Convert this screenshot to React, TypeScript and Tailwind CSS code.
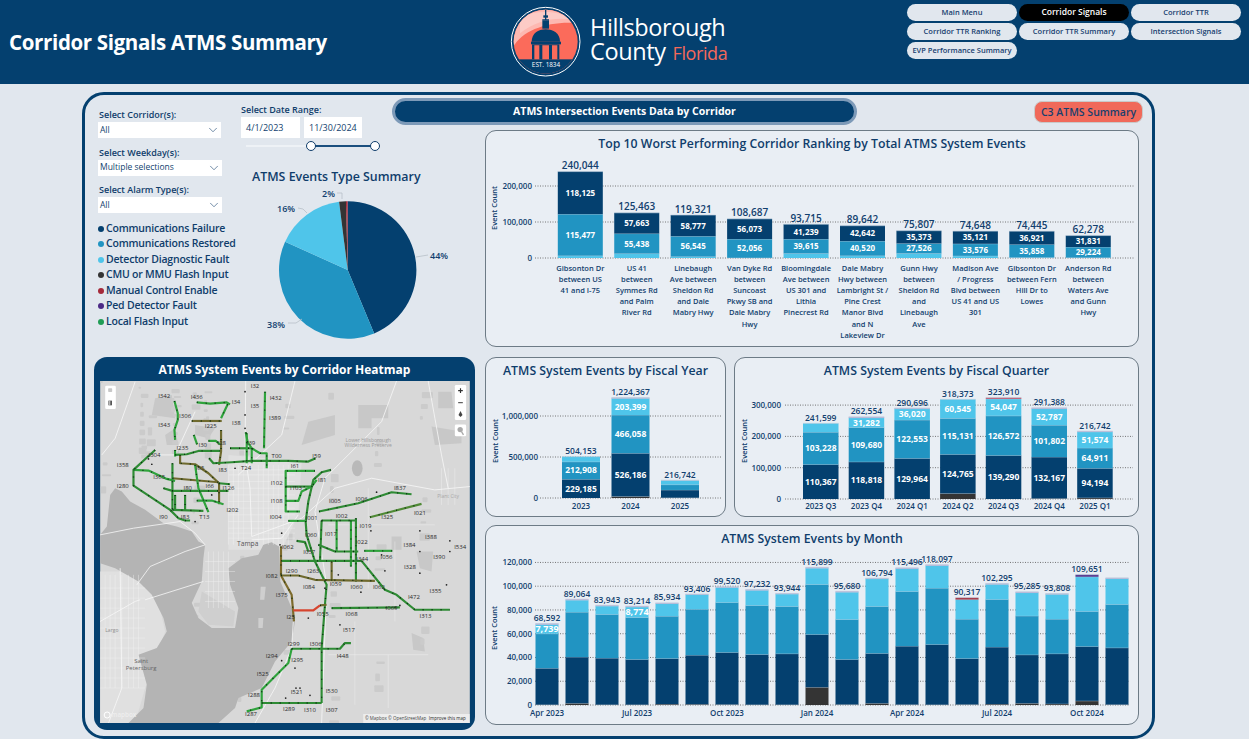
import { ChevronDown } from 'lucide-react';

const NAVY = '#04406f';
const BLUE = '#2194c2';
const LIGHT = '#4fc5ea';
const DARK = '#343434';
const LILAC = '#b9a9d3';
const RED = '#a52a3a';
const PURPLE = '#4b2a86';
const INK = '#123f6e';

type Seg = [number, string, string?];
type Bar = { total?: string; segs: Seg[]; cat?: string[] };

const navItems = [
  'Main Menu',
  'Corridor Signals',
  'Corridor TTR',
  'Corridor TTR Ranking',
  'Corridor TTR Summary',
  'Intersection Signals',
  'EVP Performance Summary',
];

const legend = [
  ['Communications Failure', NAVY],
  ['Communications Restored', BLUE],
  ['Detector Diagnostic Fault', LIGHT],
  ['CMU or MMU Flash Input', DARK],
  ['Manual Control Enable', RED],
  ['Ped Detector Fault', PURPLE],
  ['Local Flash Input', '#1f9d55'],
];

const fmt = (n: number) => n.toLocaleString('en-US');

// top chart: total, navy, blue, the rest is the light part at the bottom
const topBars: [number, number, number, string[]][] = [
  [240044, 118125, 115477, ['Gibsonton Dr', 'between US', '41 and I-75']],
  [125463, 57663, 55438, ['US 41', 'between', 'Symmes Rd', 'and Palm', 'River Rd']],
  [119321, 58777, 56545, ['Linebaugh', 'Ave between', 'Sheldon Rd', 'and Dale', 'Mabry Hwy']],
  [108687, 56073, 52056, ['Van Dyke Rd', 'between', 'Suncoast', 'Pkwy SB and', 'Dale Mabry', 'Hwy']],
  [93715, 41239, 39615, ['Bloomingdale', 'Ave between', 'US 301 and', 'Lithia', 'Pinecrest Rd']],
  [89642, 42642, 40520, ['Dale Mabry', 'Hwy between', 'Lambright St /', 'Pine Crest', 'Manor Blvd', 'and N', 'Lakeview Dr']],
  [75807, 35373, 27526, ['Gunn Hwy', 'between', 'Sheldon Rd', 'and', 'Linebaugh', 'Ave']],
  [74648, 35121, 33576, ['Madison Ave', '/ Progress', 'Blvd between', 'US 41 and US', '301']],
  [74445, 36921, 35858, ['Gibsonton Dr', 'between Fern', 'Hill Dr to', 'Lowes']],
  [62278, 31831, 29224, ['Anderson Rd', 'between', 'Waters Ave', 'and Gunn', 'Hwy']],
];

const yearBars: Bar[] = [
  { total: '504,153', cat: ['2023'], segs: [[229185, NAVY, '229,185'], [212908, BLUE, '212,908'], [62060, LIGHT]] },
  {
    total: '1,224,367',
    cat: ['2024'],
    segs: [[20000, DARK], [526186, NAVY, '526,186'], [466058, BLUE, '466,058'], [203399, LIGHT, '203,399'], [8724, LILAC]],
  },
  { total: '216,742', cat: ['2025'], segs: [[4000, DARK], [94194, NAVY], [64911, BLUE], [51574, LIGHT], [2063, LILAC]] },
];

const quarterBars: Bar[] = [
  { total: '241,599', cat: ['2023 Q3'], segs: [[110367, NAVY, '110,367'], [103228, BLUE, '103,228'], [28004, LIGHT]] },
  { total: '262,554', cat: ['2023 Q4'], segs: [[118818, NAVY, '118,818'], [109680, BLUE, '109,680'], [31282, LIGHT, '31,282'], [2774, LILAC]] },
  { total: '290,696', cat: ['2024 Q1'], segs: [[129964, NAVY, '129,964'], [122553, BLUE, '122,553'], [36020, LIGHT, '36,020'], [2159, LILAC]] },
  { total: '318,373', cat: ['2024 Q2'], segs: [[17932, DARK], [124765, NAVY, '124,765'], [115131, BLUE, '115,131'], [60545, LIGHT, '60,545']] },
  { total: '323,910', cat: ['2024 Q3'], segs: [[139290, NAVY, '139,290'], [126572, BLUE, '126,572'], [54047, LIGHT, '54,047'], [4001, '#c0506a']] },
  { total: '291,388', cat: ['2024 Q4'], segs: [[2000, DARK], [132167, NAVY, '132,167'], [101802, BLUE, '101,802'], [52787, LIGHT, '52,787'], [2632, LILAC]] },
  { total: '216,742', cat: ['2025 Q1'], segs: [[4000, DARK], [94194, NAVY, '94,194'], [64911, BLUE, '64,911'], [51574, LIGHT, '51,574'], [2063, LILAC]] },
];

// dark, navy top, blue top, light top, total (all in thousands except the label)
const monthRows: [number, number, number, number, string, string?, string?][] = [
  [0.3, 31, 60, 67.8, '68,592', '7,739'],
  [1.5, 40.4, 78.2, 88.3, '89,064'],
  [0.3, 39.5, 76.3, 83.3, '83,943'],
  [0.3, 38.4, 73.7, 82.5, '83,214', '8,774'],
  [0.8, 39.2, 74.8, 85.4, '85,934'],
  [0.7, 42, 80.7, 93, '93,406'],
  [0.5, 44.3, 86.3, 99, '99,520'],
  [0.3, 42.6, 83.8, 96.6, '97,232'],
  [0.3, 43.2, 83, 93.4, '93,944'],
  [15, 59.4, 101.5, 115.2, '115,899'],
  [0.5, 38.4, 72, 95, '95,680'],
  [1.5, 43.5, 83, 106.3, '106,794'],
  [0.4, 49.6, 95.6, 114.8, '115,496'],
  [0.3, 51, 98.4, 117.4, '118,097'],
  [0.5, 39.2, 72.3, 88.8, '90,317', undefined, RED],
  [0.8, 48.8, 88.9, 101.6, '102,295'],
  [1.5, 42.3, 75, 94.6, '95,285'],
  [1, 43.2, 72.3, 93.2, '93,808'],
  [3.5, 49.3, 78.8, 108, '109,651', undefined, PURPLE],
  [0.4, 48.2, 84.7, 106.4, ''],
];

const monthCats = ['Apr 2023', 'Jul 2023', 'Oct 2023', 'Jan 2024', 'Apr 2024', 'Jul 2024', 'Oct 2024'];

const monthBars: Bar[] = monthRows.map(([d, n, b, l, total, lab, topColor], i) => {
  const end = total ? parseFloat(total.replace(',', '')) / 1000 : 107;
  return {
    total,
    cat: i % 3 === 0 ? [monthCats[i / 3]] : undefined,
    segs: [
      [d * 1000, DARK],
      [(n - d) * 1000, NAVY],
      [(b - n) * 1000, BLUE],
      [(l - b) * 1000, LIGHT, lab],
      [(end - l) * 1000, topColor ?? LILAC],
    ],
  };
});

function StackedChart(props: {
  box: [number, number, number, number];
  base: number;
  scale: number;
  x0: number;
  step: number;
  barW: number;
  ticks: number[];
  tickX: number;
  gridFrom: number;
  gridTo: number;
  axisX: number;
  axisY: number;
  bars: Bar[];
  catY: number;
  catSize?: number;
  labelSize?: number;
  totalSize?: number;
}) {
  const { box, base, scale, x0, step, barW, ticks, tickX, gridFrom, gridTo, axisX, axisY, bars, catY } = props;
  const labelSize = props.labelSize ?? 8.5;
  const totalSize = props.totalSize ?? 8.5;
  const catSize = props.catSize ?? 8;
  return (
    <svg viewBox={box.join(' ')} width={box[2]} height={box[3]} className="block">
      {ticks.map((t) => (
        <g key={t}>
          <line x1={gridFrom} x2={gridTo} y1={base - t * scale} y2={base - t * scale} stroke="#555" strokeWidth="0.8" strokeDasharray="1 1.5" />
          <text x={tickX} y={base - t * scale + 3} textAnchor="end" fontSize="8" fontWeight="600" fill={INK}>
            {fmt(t)}
          </text>
        </g>
      ))}
      <text transform={`translate(${axisX} ${axisY}) rotate(-90)`} textAnchor="middle" fontSize="7.5" fontWeight="600" fill={INK}>
        Event Count
      </text>
      {bars.map((bar, i) => {
        const x = x0 + i * step;
        let acc = 0;
        const top = bar.segs.reduce((s, g) => s + g[0], 0);
        return (
          <g key={i}>
            {bar.segs.map((seg, j) => {
              const y = base - (acc + seg[0]) * scale;
              const h = seg[0] * scale;
              acc += seg[0];
              return (
                <g key={j}>
                  <rect x={x} y={y} width={barW} height={h} fill={seg[1]} />
                  <line x1={x} x2={x + barW} y1={y} y2={y} stroke="#b8cbdb" strokeWidth="0.6" />
                  {seg[2] && (
                    <text x={x + barW / 2} y={y + h / 2 + 3} textAnchor="middle" fontSize={labelSize} fontWeight="700" fill="#fff">
                      {seg[2]}
                    </text>
                  )}
                </g>
              );
            })}
            {bar.total && (
              <text x={x + barW / 2} y={base - top * scale - 2.5} textAnchor="middle" fontSize={totalSize} fontWeight="600" fill={INK}>
                {bar.total}
              </text>
            )}
            {bar.cat?.map((line, k) => (
              <text key={k} x={x + barW / 2} y={catY + k * 11.1} textAnchor="middle" fontSize={catSize} fontWeight="600" fill={INK}>
                {line}
              </text>
            ))}
          </g>
        );
      })}
    </svg>
  );
}

function Card({ title, className, children }: { title: string; className: string; children: React.ReactNode }) {
  return (
    <div className={`rounded-[11px] border border-[#6d7b86] bg-[#e9eef4] overflow-hidden ${className}`}>
      <div className="text-center text-[12.3px] font-semibold text-[#0f3d6b] h-[27px] leading-[25px]">{title}</div>
      {children}
    </div>
  );
}

function Slicer({ label, value, width }: { label: string; value: string; width: string }) {
  return (
    <div className="mb-[7.5px]">
      <div className="text-[9px] font-semibold text-[#0f3d6b] h-[14px] leading-[14px] pl-[1px]">{label}</div>
      <div className={`bg-white h-[16px] flex items-center justify-between pl-[2px] pr-[1px] ${width}`}>
        <span className="text-[8.5px] text-[#123f6e]">{value}</span>
        <ChevronDown size={14} strokeWidth={1} color="#0f3d6b" />
      </div>
    </div>
  );
}

function pieSlice(from: number, to: number) {
  const r = 68.7;
  const pt = (p: number) => {
    const a = (p / 100) * 2 * Math.PI;
    return `${(r * Math.sin(a)).toFixed(2)} ${(-r * Math.cos(a)).toFixed(2)}`;
  };
  return `M0 0 L${pt(from)} A${r} ${r} 0 ${to - from > 50 ? 1 : 0} 1 ${pt(to)} Z`;
}

function Pie() {
  const slices: [number, number, string][] = [
    [0, 43.7, NAVY],
    [43.7, 81.75, BLUE],
    [81.75, 98, LIGHT],
    [98, 99.6, DARK],
    [99.6, 100, RED],
  ];
  return (
    <svg viewBox="240 186 220 160" width={220} height={160} className="block">
      <g transform="translate(347.7 270)">
        {slices.map(([a, b, c]) => (
          <path key={c} d={pieSlice(a, b)} fill={c} />
        ))}
      </g>
      <g fill="none" stroke="#b8c0c8" strokeWidth="0.8">
        <path d="M416 257 L428 255" />
        <path d="M288 323 L296 323 L302 319" />
        <path d="M298 208 L303 209 L307 213" />
        <path d="M337 193 L342 193 L342 199" />
      </g>
      <g fontSize="9" fontWeight="600" fill={INK}>
        <text x="430" y="259">44%</text>
        <text x="267" y="328">38%</text>
        <text x="277" y="212">16%</text>
        <text x="322" y="197">2%</text>
      </g>
    </svg>
  );
}

function Logo() {
  return (
    <svg viewBox="90 18 216 216" width={72} height={72} className="block">
      <defs>
        <clipPath id="seal">
          <circle cx="197" cy="125" r="96" />
        </clipPath>
      </defs>
      <circle cx="197" cy="125" r="103" fill="none" stroke="#fff" strokeWidth="3" />
      <g clipPath="url(#seal)">
        <rect x="90" y="18" width="216" height="216" fill="#fb6b5b" />
        <path d="M95 150 C120 90 210 60 300 70 L300 20 L90 20 Z" fill="#fdb8b1" />
        <path d="M120 50 C170 30 240 30 280 60 C230 50 170 60 120 100 Z" fill="#fccbc6" />
        <rect x="90" y="178" width="216" height="60" fill={NAVY} />
      </g>
      <path d="M197 30 L197 60 M187 60 L207 60" stroke={NAVY} strokeWidth="4" fill="none" />
      <rect x="190" y="46" width="14" height="7" fill={NAVY} />
      <rect x="187" y="62" width="20" height="24" fill={NAVY} />
      <path d="M155 125 C155 100 175 88 197 88 C220 88 240 100 240 125 Z" fill={NAVY} />
      <rect x="153" y="125" width="90" height="8" fill={NAVY} />
      <path d="M156 133 H238 V178 H156 Z" fill={NAVY} />
      <path d="M163 136 H178 V178 H163 Z M187 136 H207 V178 H187 Z M216 136 H232 V178 H216 Z" fill="#fb6b5b" />
      <text x="198" y="201" textAnchor="middle" fontSize="19" fill="#fff">EST. 1834</text>
    </svg>
  );
}

type Line = [string, string];
const G = '#2fa33c';
const DG = '#2e8b34';
const O = '#6f6a2e';
const corridors: Line[] = [
  ['M238 138 L248 175 L248 195 L238 225 L240 255', G],
  ['M305 142 L345 146 L395 142 L405 148', G],
  ['M398 148 L378 190', G],
  ['M290 198 L380 198', O],
  ['M378 225 L378 290 L372 330', O],
  ['M296 240 L306 268', G],
  ['M340 258 L362 258 L375 268', G],
  ['M405 280 L470 280', DG],
  ['M452 232 L458 262 L470 280 L495 295 L515 295 L515 340', G],
  ['M455 235 L455 325', G],
  ['M470 280 L470 325', G],
  ['M510 110 L507 280', G],
  ['M240 285 L240 305', G],
  ['M240 300 L275 298 L310 288 L375 288', DG],
  ['M342 310 L355 325 L410 322 L470 318 L580 318 L640 320 L662 310', DG],
  ['M180 285 L115 345 L115 392 L225 465 L250 490 L270 497 L285 497', DG],
  ['M115 345 L160 347 L215 372 L240 378', G],
  ['M232 370 L370 382', O],
  ['M255 300 L255 325 L300 328 L340 355 L372 385', O],
  ['M232 325 L232 465', DG],
  ['M205 400 L232 408 L400 408', DG],
  ['M300 330 L310 400 L340 472', G],
  ['M372 385 L372 448', O],
  ['M305 437 L350 437 L385 448', G],
  ['M232 465 L325 468', DG],
  ['M240 420 L240 465', DG],
  ['M270 420 L270 465', DG],
  ['M372 385 L405 388', DG],
  ['M660 348 L572 348 L572 470 L615 470', G],
  ['M572 395 L650 395', DG],
  ['M572 438 L610 438 L620 410 L650 395 L665 375', G],
  ['M708 345 L680 352 L655 375 L640 440 L632 500 L635 540 L660 620 L695 690 L690 750 L680 880 L680 1045', DG],
  ['M580 498 L635 498', G],
  ['M672 470 L790 445 L890 412 L950 418', DG],
  ['M825 487 L980 447', '#4f8a35'],
  ['M680 497 L785 497', DG],
  ['M680 497 L675 620', DG],
  ['M725 497 L725 590', G],
  ['M768 497 L768 635', G],
  ['M783 490 L783 680', DG],
  ['M605 558 L630 562 L640 590', DG],
  ['M670 570 L720 590 L790 590', DG],
  ['M808 588 L892 588', G],
  ['M558 618 L800 618 L870 705 L905 720 L960 765 L1065 765', DG],
  ['M558 575 L558 662 L590 720 L597 800', '#7d6b2c'],
  ['M558 662 L610 662 L660 675 L840 678', O],
  ['M675 752 L695 750', O],
  ['M710 760 L915 758', DG],
  ['M590 882 L735 882 L750 865 L768 865', DG],
  ['M590 882 L580 925 L500 1005 L500 1058 L455 1070', G],
  ['M500 1045 L680 1045', DG],
  ['M710 620 L710 678', O],
];

const mapLabels: [string, number, number][] = [
  ['I342', 207, 122], ['I436', 305, 127], ['I34', 423, 142], ['I32', 480, 92], ['I432', 542, 130], ['I35', 480, 153],
  ['I389', 540, 188], ['I306', 270, 182], ['I343', 207, 210], ['I225', 347, 213], ['I38', 424, 205], ['I39', 468, 264],
  ['I28', 380, 263], ['I30', 323, 270], ['I235', 262, 278], ['I304', 178, 300], ['I358', 83, 330], ['T00', 545, 302],
  ['I59', 665, 302], ['T24', 453, 338], ['I61', 600, 332], ['I83', 383, 345], ['I65', 315, 338], ['I365', 192, 367],
  ['I280', 83, 394], ['I80', 278, 398], ['I66', 344, 392], ['I126', 400, 398], ['I102', 545, 384], ['I103', 603, 398],
  ['I108', 545, 438], ['I81', 682, 375], ['I005', 720, 437], ['I006', 800, 433], ['I837', 915, 400], ['I021', 975, 474],
  ['I325', 877, 485], ['I002', 740, 483], ['I001', 650, 488], ['I004', 542, 487], ['I202', 412, 465], ['T13', 328, 487],
  ['I83', 270, 487], ['I90', 205, 487], ['I019', 812, 514], ['I017', 708, 536], ['I060', 648, 540], ['I022', 800, 563],
  ['I388', 1008, 546], ['I384', 944, 570], ['I534', 1096, 577], ['I056', 875, 606], ['I390', 1033, 606], ['I328', 945, 636],
  ['I344', 802, 614], ['I062', 578, 576], ['I057', 643, 592], ['I290', 590, 648], ['I263', 655, 648], ['I082', 530, 663],
  ['I059', 722, 687], ['I084', 642, 696], ['I060', 785, 696], ['I062', 852, 696], ['I375', 560, 720], ['I472', 957, 728],
  ['I355', 1022, 710], ['I313', 992, 785], ['I068', 770, 778], ['I069', 890, 760], ['I055', 683, 778], ['I25', 587, 787],
  ['I517', 762, 827], ['I299', 596, 867], ['I306', 662, 867], ['I448', 743, 903], ['I294', 530, 903], ['I295', 607, 915],
  ['I525', 503, 958], ['I288', 477, 1020], ['I521', 605, 1013], ['I530', 710, 1008], ['I289', 582, 1064], ['I310', 645, 1066],
  ['I307', 710, 1066], ['I287', 468, 1078],
];

const roads = [
  'M15 540 L115 520 L255 500 L300 535 L330 570',
  'M125 690 L165 635 L270 590 L330 570',
  'M150 735 L325 680',
  'M452 78 L450 300 L465 400 L470 545',
  'M470 545 L620 490 L720 400 L830 370 L1020 405 L1125 395',
  'M905 78 L860 200 L760 300 L690 370 L660 470 L695 690 L680 1105',
  'M1000 78 L1040 300 L1060 400',
  'M470 555 L560 550 L610 480',
  'M595 800 L590 880 L540 1000 L480 1105',
  'M15 800 L120 740 L135 735',
  'M75 640 L80 1000 L40 1105',
  'M600 78 L560 240 L430 360',
  'M120 80 L60 250 L20 300',
  'M300 170 L240 300 L180 300',
];

const grid = [
  ...[400, 415, 430, 445, 490, 505, 520, 535, 550, 565, 580].map((x) => `M${x} 330 V570`),
  ...[345, 360, 380, 400, 420, 440, 460, 480, 500, 520, 535, 550].map((y) => `M400 ${y} H600`),
  ...[30, 45, 60, 80, 100, 115, 130].map((x) => `M${x} 660 V1000`),
  ...[700, 730, 760, 790, 820, 850, 880, 910, 940, 970, 1000].map((y) => `M15 ${y} H150`),
  ...[340, 355, 370, 385, 400].map((x) => `M${x} 590 V760`),
  ...[620, 650, 680, 710, 740].map((y) => `M330 ${y} H420`),
  ...[1040, 1060, 1080].map((x) => `M${x} 340 V450`),
  'M700 510 H1020', 'M820 400 V700', 'M900 560 V800', 'M700 900 H1000', 'M780 800 V1050', 'M880 900 L880 1060',
];

const patches = [
  'M790 150 H880 V190 H830 V220 H790 Z', 'M640 200 L720 180 L720 240 L620 270 Z', 'M1010 215 L1100 230 L1100 265 L1020 270 Z',
  'M1030 110 L1070 110 L1075 160 L1030 160 Z', 'M965 590 L1015 590 L1010 650 L975 640 Z', 'M890 545 L920 545 L920 585 L890 585 Z',
  'M950 835 L985 850 L990 890 L955 885 Z', 'M180 130 L230 120 L240 190 L170 180 Z', 'M210 240 L240 220 L250 270 L215 270 Z',
  'M100 980 L140 1000 L130 1050 L90 1030 Z', 'M300 210 L360 220 L340 250 L300 240 Z',
];

// small darker blotches for the wetlands and parks, spread over the land
const blobs = [
  ...Array.from({ length: 80 }, (_, i) => [15 + ((i * 137) % 1095), 78 + ((i * 211) % 1020), 8 + ((i * 7) % 26), 6 + ((i * 11) % 20)]),
  ...Array.from({ length: 30 }, (_, i) => [130 + ((i * 97) % 290), 95 + ((i * 61) % 210), 8 + ((i * 5) % 18), 6 + ((i * 9) % 14)]),
];

const dots = [
  [450, 110], [450, 180], [450, 220], [170, 328], [160, 312], [350, 420], [300, 500], [560, 535], [555, 570], [845, 412], [828, 528],
  [975, 528], [1065, 558], [1065, 590], [975, 590], [975, 655], [870, 648], [860, 600], [798, 712], [1055, 690], [735, 810], [600, 940],
  [560, 918], [645, 1022], [603, 1000], [615, 1000], [572, 1030], [690, 700], [915, 752], [640, 790], [420, 340], [730, 660],
];

function MapDrawing() {
  return (
    <svg viewBox="15 78 1110 1027" width={370} height={342} className="block">
      <rect x="15" y="78" width="1110" height="1027" fill="#d8d8d8" />
      {patches.map((d) => (
        <path key={d} d={d} fill="#c8c8c8" />
      ))}
      {blobs.map(([x, y, w, h], i) => (
        <rect key={i} x={x} y={y} width={w} height={h} rx="3" fill="#cbcbcb" />
      ))}
      <ellipse cx="787" cy="340" rx="16" ry="24" fill="#b9b9b9" />
      <path d="M400 300 L620 320 L610 480 L560 585 L400 585 Z M15 650 H170 L210 830 L150 1000 L120 1105 H15 Z" fill="#e0e0e0" />
      <path
        d="M15 540 L35 515 L45 420 L60 400 L80 410 L105 440 L150 465 L205 505 L245 515 L290 530 L310 560 L330 570 L325 610 L320 680 L290 745 L310 790 L350 820 L420 820 L430 760 L405 690 L400 640 L440 610 L490 600 L505 570 L530 562 L552 575 L556 680 L590 760 L600 800 L590 860 L540 920 L500 1000 L430 1030 L420 1060 L370 1105 L100 1105 L145 1060 L155 990 L130 900 L185 880 L215 830 L205 790 L170 720 L130 680 L60 640 L15 625 Z"
        fill="#b4b4b4"
      />
      <path d="M497 696 L512 696 L508 735 L495 735 Z M490 790 L505 790 L503 820 L490 820 Z M320 710 L420 770 L415 815 L340 810 L310 770 Z" fill="#cfcfcf" />
      <path d={grid.join(' ')} stroke="#f3f3f3" strokeWidth="1.2" fill="none" />
      <path d={roads.join(' ')} stroke="#f7f7f7" strokeWidth="2.4" fill="none" />
      <text x="820" y="262" textAnchor="middle" fontSize="15" fill="#9a9a9a">Lower Hillsborough</text>
      <text x="820" y="277" textAnchor="middle" fontSize="15" fill="#9a9a9a">Wilderness Preserve</text>
      <text x="1060" y="430" textAnchor="middle" fontSize="15" fill="#a8a8a8">Plant City</text>
      <text x="50" y="833" textAnchor="middle" fontSize="15" fill="#8f8f8f">Largo</text>
      <text x="458" y="574" textAnchor="middle" fontSize="20" fill="#555">Tampa</text>
      <text x="138" y="924" textAnchor="middle" fontSize="18" fill="#666">Saint</text>
      <text x="138" y="946" textAnchor="middle" fontSize="18" fill="#666">Petersburg</text>
      {corridors.map(([d, c], i) => (
        <path key={i} d={d} stroke={c} strokeWidth="6.5" fill="none" strokeLinejoin="round" />
      ))}
      <path d="M595 767 L655 767 L675 752" stroke="#d6452f" strokeWidth="6.5" fill="none" />
      {corridors.map(([d], i) => (
        <path key={i} d={d} stroke="#0d2b12" strokeWidth="4" fill="none" strokeDasharray="3 24" />
      ))}
      {dots.map(([x, y], i) => (
        <circle key={i} cx={x} cy={y} r="2.6" fill="#222" />
      ))}
      {mapLabels.map(([t, x, y], i) => (
        <text key={i} x={x} y={y + 6} textAnchor="middle" fontSize="18" fill="#2b2b2b">
          {t}
        </text>
      ))}
      <rect x="30" y="92" width="32" height="70" rx="4" fill="#fff" />
      <rect x="39" y="100" width="12" height="11" rx="2" fill="#c8c8c8" />
      <path d="M40 137 H50 V151 H40 Z" fill="#333" />
      <path d="M44 137 V151" stroke="#fff" strokeWidth="3" />
      <rect x="1080" y="90" width="34" height="105" rx="4" fill="#fff" />
      <path d="M1097 100 V114 M1090 107 H1104" stroke="#333" strokeWidth="3.5" />
      <path d="M1090 143 H1104" stroke="#555" strokeWidth="3.5" />
      <path d="M1097 168 L1103 180 L1097 186 L1091 180 Z" fill="#444" />
      <rect x="1080" y="209" width="34" height="35" rx="4" fill="#fff" />
      <circle cx="1096" cy="224" r="8" fill="#aaa" />
      <path d="M1100 230 L1106 240" stroke="#aaa" strokeWidth="4" />
      <circle cx="36" cy="1081" r="9" fill="none" stroke="#fff" strokeWidth="3" />
      <text x="86" y="1087" textAnchor="middle" fontSize="19" fontWeight="600" fill="#eee">mapbox</text>
      <rect x="805" y="1078" width="320" height="27" fill="#fff" opacity="0.55" />
      <text x="810" y="1096" fontSize="13.5" fill="#444">© Mapbox © OpenStreetMap</text>
      <text x="1002" y="1096" fontSize="13.5" fill="#222">Improve this map</text>
    </svg>
  );
}

export default function App() {
  return (
    <div className="w-[1249px] h-[739px] overflow-hidden bg-[#e1e7ee] font-['Open_Sans','Liberation_Sans',sans-serif]">
      <header className="h-[84px] bg-[#04406f] flex">
        <div className="w-[510px] pl-[9px] flex items-center">
          <h1 className="text-[20.5px] font-bold text-white tracking-[-0.35px]">Corridor Signals ATMS Summary</h1>
        </div>
        <div className="w-[397px] flex items-center">
          <Logo />
          <div className="ml-[8px] text-white text-[23.5px] font-medium leading-[24px] -mt-[4px] tracking-[-0.4px]">
            <div>Hillsborough</div>
            <div className="flex items-baseline gap-[7px]">
              County <span className="text-[18px] text-[#f4695a]">Florida</span>
            </div>
          </div>
        </div>
        <nav className="w-[334px] pt-[4px] grid grid-cols-3 gap-x-[2px] gap-y-[2px] content-start">
          {navItems.map((item) => (
            <div
              key={item}
              className={`h-[17px] rounded-full flex items-center justify-center font-semibold whitespace-nowrap ${
                item === 'Corridor Signals' ? 'bg-black text-white text-[8.5px]' : 'bg-[#e1e7ee] text-[#17406f] text-[7.5px]'
              }`}
            >
              {item}
            </div>
          ))}
        </nav>
      </header>

      <main className="ml-[82px] mt-[8px] w-[1073px] h-[647px] border-[3px] border-[#04406f] rounded-[22px] flex pl-[9px]">
        <section className="w-[382px] flex flex-col">
          <div className="h-[262px] flex">
            <div className="w-[147px] pl-[4px] pt-[13px]">
              <Slicer label="Select Corridor(s):" value="All" width="w-[123px]" />
              <Slicer label="Select Weekday(s):" value="Multiple selections" width="w-[124px]" />
              <Slicer label="Select Alarm Type(s):" value="All" width="w-[124px]" />
              <ul className="pt-[0.5px]">
                {legend.map(([name, color]) => (
                  <li key={name} className="flex items-center h-[15.5px] text-[10.5px] font-semibold text-[#0f3d6b] whitespace-nowrap tracking-[-0.2px]">
                    <span className="w-[6px] h-[6px] rounded-full mr-[2px] shrink-0" style={{ backgroundColor: color }} />
                    {name}
                  </li>
                ))}
              </ul>
            </div>
            <div className="flex-1 min-w-0">
              <div className="pt-[8px] text-[9px] font-semibold text-[#0f3d6b] h-[22px]">Select Date Range:</div>
              <div className="flex gap-[4px]">
                <div className="w-[59px] h-[21px] bg-white flex items-center pl-[5px] text-[9px] text-[#123f6e]">4/1/2023</div>
                <div className="w-[58px] h-[21px] bg-white flex items-center pl-[5px] text-[9px] text-[#123f6e]">11/30/2024</div>
              </div>
              <div className="relative ml-[5px] mt-[7px] w-[129px] h-[2px] bg-[#eef2f6]">
                <div className="absolute left-[65px] right-0 top-0 h-[2px] bg-[#1b4f7e]" />
                <div className="absolute left-[60px] -top-[4px] w-[10px] h-[10px] rounded-full bg-white border border-[#0f3d6b]" />
                <div className="absolute right-[-5px] -top-[4px] w-[10px] h-[10px] rounded-full bg-white border border-[#0f3d6b]" />
              </div>
              <div className="mt-[22px] pl-[11px] text-[12.4px] font-semibold text-[#0f3d6b] h-[16px] leading-[16px]">ATMS Events Type Summary</div>
              <div className="-ml-[1px] mt-[1px]">
                <Pie />
              </div>
            </div>
          </div>
          <div className="w-[381px] h-[373px] bg-[#04406f] rounded-[13px] px-[6px]">
            <div className="h-[24px] text-center text-[12px] font-bold leading-[26px] text-white">ATMS System Events by Corridor Heatmap</div>
            <MapDrawing />
          </div>
        </section>

        <section className="ml-[9px] w-[654px] pt-[3px] flex flex-col">
          <div className="h-[27px] -ml-[93px] -mr-[4px] flex items-center justify-between">
            <div className="w-[465px] h-[27px] rounded-full border-[3px] border-[#7d9ab8] bg-[#04406f] text-center text-white text-[10.5px] font-bold leading-[20px]">
              ATMS Intersection Events Data by Corridor
            </div>
            <div className="w-[109px] h-[22px] rounded-[8px] border border-[#c9c9c9] bg-[#f0695a] text-center text-[#17406f] text-[10.5px] font-semibold leading-[20px]">
              C3 ATMS Summary
            </div>
          </div>
          <Card title="Top 10 Worst Performing Corridor Ranking by Total ATMS System Events" className="mt-[5px] h-[217px]">
            <StackedChart
              box={[486, 158, 652, 188]}
              base={258}
              scale={0.00036}
              x0={557.8}
              step={56.44}
              barW={45}
              ticks={[0, 100000, 200000]}
              tickX={532}
              gridFrom={535}
              gridTo={1135}
              axisX={497}
              axisY={208}
              catY={271}
              catSize={7.5}
              labelSize={8}
              totalSize={10}
              bars={topBars.map(([t, n, b, cat]) => ({
                total: fmt(t),
                cat,
                segs: [[t - n - b, LIGHT], [b, BLUE, fmt(b)], [n, NAVY, fmt(n)]] as Seg[],
              }))}
            />
          </Card>
          <div className="mt-[10px] h-[160px] flex gap-[8px]">
            <Card title="ATMS System Events by Fiscal Year" className="w-[241px]">
              <StackedChart
                box={[486, 385, 240, 132]}
                base={498}
                scale={0.000082}
                x0={562}
                step={49.5}
                barW={38}
                ticks={[0, 500000, 1000000]}
                tickX={538}
                gridFrom={540}
                gridTo={721}
                axisX={498}
                axisY={441}
                catY={509}
                bars={yearBars}
              />
            </Card>
            <Card title="ATMS System Events by Fiscal Quarter" className="flex-1">
              <StackedChart
                box={[735, 385, 404, 132]}
                base={499}
                scale={0.000313}
                x0={803}
                step={45.7}
                barW={35.5}
                ticks={[0, 100000, 200000, 300000]}
                tickX={781}
                gridFrom={785}
                gridTo={1133}
                axisX={747}
                axisY={441}
                catY={509}
                bars={quarterBars}
              />
            </Card>
          </div>
          <Card title="ATMS System Events by Month" className="mt-[8px] h-[200px]">
            <StackedChart
              box={[486, 553, 652, 172]}
              base={705}
              scale={0.001188}
              x0={535.5}
              step={30}
              barW={23}
              ticks={[0, 20000, 40000, 60000, 80000, 100000, 120000]}
              tickX={532}
              gridFrom={535}
              gridTo={1129}
              axisX={497}
              axisY={628}
              catY={716}
              labelSize={9}
              bars={monthBars}
            />
          </Card>
        </section>
      </main>
    </div>
  );
}
